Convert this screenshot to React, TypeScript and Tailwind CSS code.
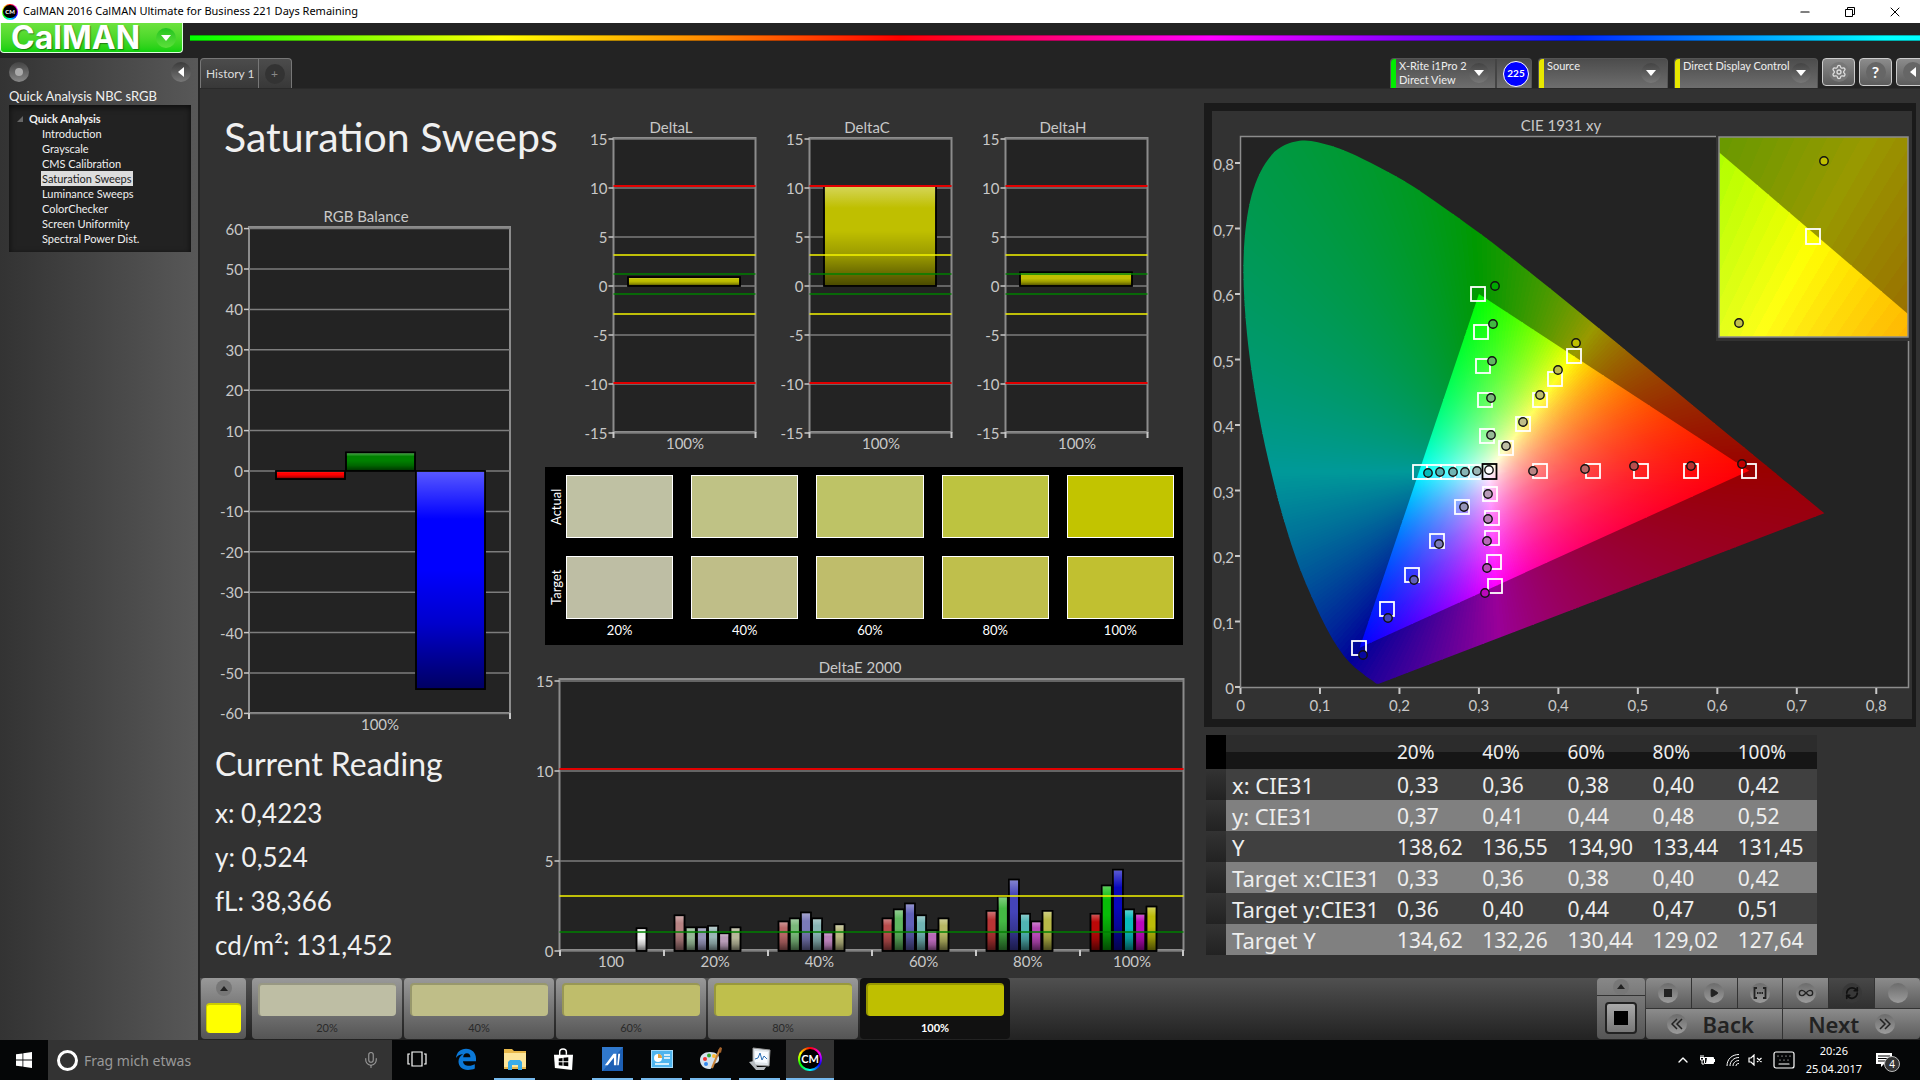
import type { ReactNode } from "react";
import { ChevronUp, Mic, Infinity as InfinityIcon, RefreshCw, Settings, Minus, X, Play, Keyboard } from "lucide-react";

const TREE = ["Introduction", "Grayscale", "CMS Calibration", "Saturation Sweeps", "Luminance Sweeps", "ColorChecker", "Screen Uniformity", "Spectral Power Dist."];

const LEVELS = ["20%", "40%", "60%", "80%", "100%"];
const ACTUAL = ["bg-[#bfc1a3]", "bg-[#bfc285]", "bg-[#bec366]", "bg-[#bdc340]", "bg-[#c2c400]"];
const TARGET = ["bg-[#bebea4]", "bg-[#bfbe88]", "bg-[#bfbd6b]", "bg-[#bfbf4c]", "bg-[#c1c030]"];
const STEPS = ["bg-[#bebea4]", "bg-[#bfbe88]", "bg-[#bfbd6b]", "bg-[#bfbf4c]", "bg-[#bfbf00]"];

const READINGS = ["x: 0,4223", "y: 0,524", "fL: 38,366", "cd/m²: 131,452"];

const TABLE = [
  { label: "x: CIE31", cells: ["0,33", "0,36", "0,38", "0,40", "0,42"] },
  { label: "y: CIE31", cells: ["0,37", "0,41", "0,44", "0,48", "0,52"] },
  { label: "Y", cells: ["138,62", "136,55", "134,90", "133,44", "131,45"] },
  { label: "Target x:CIE31", cells: ["0,33", "0,36", "0,38", "0,40", "0,42"] },
  { label: "Target y:CIE31", cells: ["0,36", "0,40", "0,44", "0,47", "0,51"] },
  { label: "Target Y", cells: ["134,62", "132,26", "130,44", "129,02", "127,64"] },
];

type Bar = { x: number; w: number; v: number; fill: string };

const DELTA_E: { label: string; values: number[]; fills: string[] }[] = [
  { label: "20%", values: [1.98, 1.31, 1.31, 1.4, 0.98, 1.31], fills: ["#b88484", "#95b895", "#9595b8", "#9bb8b8", "#b89bb8", "#b8b89b"] },
  { label: "40%", values: [1.64, 1.81, 2.14, 1.81, 1.03, 1.48], fills: ["#b86666", "#7ab87a", "#7a7ab8", "#88b4b4", "#b880b8", "#b8b880"] },
  { label: "60%", values: [1.81, 2.31, 2.64, 1.98, 1.15, 1.81], fills: ["#b84c4c", "#60b860", "#6060b8", "#70b4b4", "#b868b8", "#b8b864"] },
  { label: "80%", values: [2.23, 3.03, 3.97, 2.07, 1.64, 2.23], fills: ["#b83434", "#44b844", "#4444b8", "#50b4b4", "#b848b8", "#b8b848"] },
  { label: "100%", values: [2.07, 3.64, 4.52, 2.31, 2.07, 2.47], fills: ["#bb0808", "#08bb08", "#0808bb", "#08bbbb", "#bb08bb", "#bbbb08"] },
];

/* ---------- bar charts ---------- */

function Bars({ bars, y }: { bars: Bar[]; y: (v: number) => number }) {
  return (
    <>
      {bars.map((b, i) => {
        const top = Math.min(y(b.v), y(0));
        const h = Math.abs(y(b.v) - y(0));
        return (
          <g key={i} stroke="#000" strokeWidth="1.5">
            <rect x={b.x} y={top} width={b.w} height={h} fill={b.fill} />
            <rect x={b.x} y={top} width={b.w} height={h} fill="url(#gloss)" />
          </g>
        );
      })}
    </>
  );
}

function Chart({ title, width, height, left, right, top, bottom, titleX, titleY, y, ticks, bars, limits, xTicks, xLabels }: {
  title: string; width: number; height: number; left: number; right: number; top: number; bottom: number;
  titleX: number; titleY: number; y: (v: number) => number; ticks: number[]; bars: Bar[];
  limits?: { y: number; color: string }[]; xTicks: number[]; xLabels: { x: number; text: string }[];
}) {
  return (
    <svg viewBox={`0 0 ${width} ${height}`} className="block w-full overflow-visible font-['Lato',sans-serif] text-[15px]" fill="#c8c8c8" role="img" aria-label={title}>
      <rect x={left} y={top} width={right - left} height={bottom - top} fill="#232323" stroke="#8c8c8c" strokeWidth="2" />
      <text x={titleX} y={titleY} textAnchor="middle">{title}</text>
      {ticks.map(t => (
        <g key={t}>
          <line x1={left} x2={right} y1={y(t)} y2={y(t)} stroke="#7d7d7d" strokeWidth="1.5" />
          <line x1={left - 5} x2={left} y1={y(t)} y2={y(t)} stroke="#c8c8c8" strokeWidth="1.5" />
          <text x={left - 6} y={y(t) + 6} textAnchor="end">{t}</text>
        </g>
      ))}
      <Bars bars={bars} y={y} />
      {limits?.map(l => <line key={l.y} x1={left} x2={right} y1={l.y} y2={l.y} stroke={l.color} strokeWidth={l.color === "#e00000" ? 2 : 1.5} />)}
      {xTicks.map(x => <line key={x} x1={x} x2={x} y1={bottom} y2={bottom + 6} stroke="#c8c8c8" strokeWidth="2" />)}
      {xLabels.map(l => <text key={l.text} x={l.x} y={bottom + 17} textAnchor="middle">{l.text}</text>)}
    </svg>
  );
}

const DELTA_LIMITS = [
  { y: 73, color: "#e00000" },
  { y: 142, color: "#f4f400" },
  { y: 161, color: "#008000" },
  { y: 181, color: "#008000" },
  { y: 201, color: "#f4f400" },
  { y: 270, color: "#e00000" },
];

function DeltaChart({ title, value }: { title: string; value: number }) {
  return (
    <Chart title={title} width={196} height={342} left={39.5} right={181.5} top={25} bottom={319}
      titleX={97} titleY={20} y={v => 173 - v * 9.8} ticks={[15, 10, 5, 0, -5, -10, -15]}
      bars={[{ x: 54, w: 112, v: value, fill: "#bfbf00" }]} limits={DELTA_LIMITS}
      xTicks={[39.5, 181.5]} xLabels={[{ x: 111, text: "100%" }]} />
  );
}

function DeltaEChart() {
  const bars: Bar[] = [{ x: 96.5, w: 10, v: 1.26, fill: "#f4f4f4" }];
  DELTA_E.forEach((g, gi) => g.values.forEach((v, i) => bars.push({ x: 134.5 + gi * 104 + i * 11.2, w: 10, v, fill: g.fills[i] })));
  return (
    <Chart title="DeltaE 2000" width={650} height={323} left={19.5} right={643.5} top={24} bottom={295}
      titleX={320} titleY={18} y={v => 296 - v * 18} ticks={[15, 10, 5, 0]} bars={bars}
      limits={[{ y: 114, color: "#e00000" }, { y: 241, color: "#f4f400" }, { y: 277, color: "#008000" }]}
      xTicks={[20, 124, 228, 332, 436, 540, 643]}
      xLabels={["100", ...LEVELS].map((text, i) => ({ x: 71 + i * 104.2, text }))} />
  );
}

/* ---------- CIE diagram ---------- */

const LOCUS: [number, number][] = [
  [0.1741, 0.005], [0.1714, 0.0051], [0.1689, 0.0069], [0.1644, 0.0109], [0.1566, 0.0177], [0.144, 0.0297], [0.1355, 0.0399],
  [0.1241, 0.0578], [0.1096, 0.0868], [0.0913, 0.1327], [0.0687, 0.2007], [0.0454, 0.295], [0.0235, 0.4127], [0.0082, 0.5384],
  [0.0039, 0.6548], [0.0139, 0.7502], [0.0389, 0.812], [0.0743, 0.8338], [0.1142, 0.8262], [0.1547, 0.8059], [0.1929, 0.7816],
  [0.2296, 0.7543], [0.3016, 0.6923], [0.3731, 0.6245], [0.4441, 0.5547], [0.5125, 0.4866], [0.5752, 0.4242], [0.627, 0.3725],
  [0.6658, 0.334], [0.6915, 0.3083], [0.719, 0.2809], [0.7347, 0.2653],
];
const RED: [number, number] = [0.64, 0.33];
const GREEN: [number, number] = [0.3, 0.6];
const BLUE: [number, number] = [0.15, 0.06];
const WHITE: [number, number] = [0.3127, 0.329];

const px = (x: number) => 28.5 + x * 794.7;
const py = (y: number) => 576 - y * 655;
const pt = ([x, y]: [number, number]) => `${px(x).toFixed(2)},${py(y).toFixed(2)}`;

// Catmull-Rom through the spectral locus, closed by the purple line
const locusPath = () => {
  let d = `M${pt(LOCUS[0])}`;
  for (let i = 0; i < LOCUS.length - 1; i++) {
    const a = LOCUS[Math.max(i - 1, 0)], b = LOCUS[i], c = LOCUS[i + 1], e = LOCUS[Math.min(i + 2, LOCUS.length - 1)];
    d += `C${pt([b[0] + (c[0] - a[0]) / 6, b[1] + (c[1] - a[1]) / 6])} ${pt([c[0] - (e[0] - b[0]) / 6, c[1] - (e[1] - b[1]) / 6])} ${pt(c)}`;
  }
  return d + "Z";
};

const rgb = (x: number, y: number, k = 1) => {
  const X = x / y, Z = (1 - x - y) / y;
  const c = [3.2406 * X - 1.5372 - 0.4986 * Z, -0.9689 * X + 1.8758 + 0.0415 * Z, 0.0557 * X - 0.204 + 1.057 * Z].map(v => Math.max(0, v));
  const m = Math.max(...c);
  return `rgb(${c.map(v => Math.round((v / m) * 255 * k)).join(",")})`;
};

// distance from the white point to the gamut edge along a direction
const reach = (dx: number, dy: number) => {
  let best = 9;
  [[RED, GREEN], [GREEN, BLUE], [BLUE, RED]].forEach(([a, b]) => {
    const ex = b[0] - a[0], ey = b[1] - a[1];
    const det = dx * ey - dy * ex;
    const ax = a[0] - WHITE[0], ay = a[1] - WHITE[1];
    const t = (ax * ey - ay * ex) / det;
    if (t > 0 && t < best) best = t;
  });
  return best;
};

const WEDGES = Array.from({ length: 360 }, (_, i) => {
  const a = (i * Math.PI) / 180;
  const dx = Math.cos(a), dy = Math.sin(a);
  const t = reach(dx, dy);
  const far = (o: number): [number, number] => [WHITE[0] + Math.cos(a + o), WHITE[1] + Math.sin(a + o)];
  return {
    id: `ray${i}`,
    points: `${pt(WHITE)} ${pt(far(-0.0092))} ${pt(far(0.0092))}`,
    end: [WHITE[0] + dx * t, WHITE[1] + dy * t],
    stops: [0, 0.08, 0.16, 0.28, 0.42, 0.6, 0.8, 0.995].map(s => ({ s, c: rgb(WHITE[0] + dx * t * s, WHITE[1] + dy * t * s) })),
    outer: rgb(WHITE[0] + dx * t * 0.999, WHITE[1] + dy * t * 0.999, 0.6),
  };
});

function Gamut() {
  return (
    <g>
      <g clipPath="url(#locus)">
        {WEDGES.map(w => <polygon key={w.id} points={w.points} fill={w.outer} shapeRendering="crispEdges" />)}
      </g>
      <g clipPath="url(#srgb)">
        {WEDGES.map(w => <polygon key={w.id} points={w.points} fill={`url(#${w.id})`} shapeRendering="crispEdges" />)}
      </g>
    </g>
  );
}

const SQUARES = [
  [266, 183], [269, 221], [271, 255], [273, 289], [275, 325],
  [362, 245], [343, 268], [328, 289], [311, 313], [294, 337],
  [328, 360], [381, 360], [429, 360], [479, 360], [537, 360],
  [208, 361], [222, 361], [236, 361], [250, 361], [264, 361],
  [278, 383], [280, 407], [280, 427], [282, 451], [283, 475],
  [250, 396], [225, 430], [200, 464], [175, 498], [147, 537],
];
const DOTS: [number, number, string][] = [
  [283, 175, "#00a800"], [281, 213, "#40b840"], [280, 250, "#60b860"], [279, 287, "#7ab87a"], [279, 324, "#95b895"],
  [364, 232, "#bfbf00"], [346, 259, "#bfbf4c"], [328, 284, "#bfbd6b"], [311, 311, "#bfbe88"], [294, 335, "#bebea4"],
  [530, 353, "#c00000"], [479, 355, "#b83434"], [422, 355, "#b84c4c"], [373, 358, "#b86666"], [321, 360, "#b88484"],
  [216, 362, "#08bbbb"], [228, 361, "#50b4b4"], [241, 361, "#70b4b4"], [253, 361, "#88b4b4"], [265, 360, "#9bb8b8"],
  [276, 383, "#b89bb8"], [276, 408, "#b880b8"], [275, 430, "#b868b8"], [275, 457, "#b848b8"], [273, 482, "#bb08bb"],
  [252, 396, "#9595b8"], [227, 433, "#7a7ab8"], [202, 469, "#6060b8"], [176, 507, "#4444b8"], [151, 544, "#0808a0"],
];

function CieDiagram() {
  const ticks = [0, 1, 2, 3, 4, 5, 6, 7, 8];
  return (
    <svg viewBox="0 0 700 608" className="block w-full font-['Lato',sans-serif] text-[15px]" fill="#c8c8c8" role="img" aria-label="CIE 1931 xy">
      <defs>
        <clipPath id="locus"><path d={locusPath()} /></clipPath>
        <clipPath id="srgb"><polygon points={`${pt(RED)} ${pt(GREEN)} ${pt(BLUE)}`} /></clipPath>
        {WEDGES.map(w => (
          <linearGradient key={w.id} id={w.id} gradientUnits="userSpaceOnUse" x1={px(WHITE[0])} y1={py(WHITE[1])} x2={px(w.end[0])} y2={py(w.end[1])}>
            {w.stops.map(s => <stop key={s.s} offset={s.s} stopColor={s.c} />)}
          </linearGradient>
        ))}
      </defs>
      <text x="349" y="20" textAnchor="middle">CIE 1931 xy</text>
      <rect x="28.5" y="25.5" width="668" height="551" fill="#232323" stroke="#8c8c8c" strokeWidth="1.5" />
      <Gamut />
      {ticks.map(t => (
        <g key={t}>
          <line x1="23" x2="28" y1={py(t / 10)} y2={py(t / 10)} stroke="#c8c8c8" strokeWidth="2" />
          <text x="22" y={py(t / 10) + 7} textAnchor="end">{t ? `0,${t}` : "0"}</text>
          <line x1={px(t / 10)} x2={px(t / 10)} y1="577" y2="583" stroke="#c8c8c8" strokeWidth="2" />
          <text x={px(t / 10)} y="600" textAnchor="middle">{t ? `0,${t}` : "0"}</text>
        </g>
      ))}
      <g fill="none" stroke="#fff" strokeWidth="1.8">
        {SQUARES.map(([x, y]) => <rect key={`${x}-${y}`} x={x - 7} y={y - 7} width="14" height="14" />)}
        <rect x="270.5" y="353" width="14" height="15" stroke="#000" />
      </g>
      <g stroke="#111" strokeWidth="1.4">
        {DOTS.map(([x, y, c]) => <circle key={`${x}-${y}`} cx={x} cy={y} r="4.2" fill={c} />)}
        <circle cx="277" cy="359" r="4.2" fill="#fff" />
      </g>
      {/* magnified view round the selected patch */}
      <rect x="504" y="24" width="194" height="206" fill="#323232" />
      <svg x="507" y="26" width="189" height="200" viewBox="340.3 228.5 41.3 33.4" preserveAspectRatio="none">
        <Gamut />
      </svg>
      <rect x="507" y="26" width="189" height="200" fill="none" stroke="#8c8c8c" strokeWidth="1.5" />
      <rect x="594" y="118" width="14" height="15" fill="none" stroke="#fff" strokeWidth="1.8" />
      <circle cx="612" cy="50" r="4.2" fill="#bfbf00" stroke="#111" strokeWidth="1.4" />
      <circle cx="527" cy="212" r="4.2" fill="#bfbf4c" stroke="#111" strokeWidth="1.4" />
    </svg>
  );
}

/* ---------- chrome ---------- */

function CmBadge({ className }: { className: string }) {
  return (
    <span className={`flex items-center justify-center rounded-full bg-[conic-gradient(#f00,#f0f,#00f,#0ff,#0f0,#ff0,#f00)] ${className}`}>
      <span className="flex h-5/6 w-5/6 items-center justify-center rounded-full bg-black">CM</span>
    </span>
  );
}

function ArrowDisc() {
  return (
    <span className="flex h-5 w-5 shrink-0 items-center justify-center rounded-full bg-linear-to-b from-[#444] to-[#777]">
      <svg viewBox="0 0 10 6" className="w-2.5" fill="#fff"><path d="M0 0h10L5 6z" /></svg>
    </span>
  );
}

function DeviceTab({ lines, bar, className, children }: { lines: string[]; bar: string; className: string; children?: ReactNode }) {
  return (
    <div className={`flex rounded-t border border-b-0 border-[#555] bg-linear-to-b from-[#4c4c4c] to-[#6e6e6e] ${className}`}>
      <span className={`w-[5px] rounded-tl ${bar}`} />
      <button className="flex flex-1 items-start justify-between pr-1.5 pl-[3px] text-left text-[11px] leading-[14px] text-[#eee]">
        <span className="whitespace-nowrap">{lines.map(l => <span key={l} className="block">{l}</span>)}</span>
        <span className="pt-1"><ArrowDisc /></span>
      </button>
      {children}
    </div>
  );
}

function Header() {
  return (
    <>
      <header className="flex h-[23px] items-center bg-white pr-0.5 pl-0.5 text-black">
        <CmBadge className="h-4 w-4 text-[6px] font-bold text-white" />
        <h1 className="flex-1 pl-[5px] font-['Noto_Sans',sans-serif] text-[11px]">CalMAN 2016 CalMAN Ultimate for Business 221 Days Remaining</h1>
        <button aria-label="Minimize" className="flex w-[45px] justify-center"><Minus className="h-3.5 w-3.5" strokeWidth={2} /></button>
        <button aria-label="Restore" className="flex w-[45px] justify-center">
          <svg viewBox="0 0 10 10" className="h-2.5 w-2.5" fill="none" stroke="#000"><path d="M.5 2.5h7v7h-7zM2.5 2.5v-2h7v7h-2" /></svg>
        </button>
        <button aria-label="Close" className="flex w-[46px] justify-center"><X className="h-4 w-4" strokeWidth={1.5} /></button>
      </header>
      <div className="flex h-[35px] gap-[7px] bg-[#232323]">
        <button className="flex h-[30px] w-[183px] items-center justify-between rounded-b border border-t-0 border-[#dfd] bg-linear-to-b from-[#6de23e] to-[#0cd00c] pr-1.5 pl-2.5 text-white">
          <span className="font-['Inter',sans-serif] text-[32px] leading-7 font-bold text-shadow-[1px_1px_1px_#0006]">CalMAN</span>
          <span className="flex h-5 w-5 items-center justify-center rounded-full bg-linear-to-b from-[#1fc41f] to-[#5be03a]">
            <svg viewBox="0 0 10 6" className="w-2.5" fill="#fff"><path d="M0 0h10L5 6z" /></svg>
          </span>
        </button>
        <div className="mt-3 h-[6px] flex-1 border-y border-black/30 bg-[linear-gradient(90deg,#0f0_0%,#ff0_18%,#f80_30%,#f00_41%,#f0f_59%,#80f_70%,#02f_80%,#0ff_98%)]" />
      </div>
    </>
  );
}

function Sidebar() {
  return (
    <aside className="flex w-[200px] shrink-0 flex-col border-r-2 border-[#232323] bg-linear-to-r from-[#333] to-[#585858] pr-[7px] pl-[9px] text-[#f0f0f0]">
      <div className="flex items-center justify-between pt-1">
        <button aria-label="Pin" className="flex h-5 w-5 items-center justify-center rounded-full bg-linear-to-b from-[#444] to-[#888]">
          <span className="h-2 w-2 rounded-full bg-[#aaa]" />
        </button>
        <button aria-label="Collapse" className="flex h-5 w-5 items-center justify-center rounded-full bg-linear-to-b from-[#3c3c3c] to-[#777]">
          <svg viewBox="0 0 6 10" className="h-2.5" fill="#fff"><path d="M6 0v10L0 5z" /></svg>
        </button>
      </div>
      <h2 className="pt-[5px] text-[13px] leading-[18px] whitespace-nowrap">Quick Analysis NBC sRGB</h2>
      <nav className="h-[147px] bg-[#222] pt-1.5 text-[11px] shadow-[inset_0_2px_6px_#000a]">
        <div className="flex items-center gap-1.5 pl-2 leading-[15px] font-bold">
          <svg viewBox="0 0 6 6" className="w-1.5" fill="#666"><path d="M6 0v6H0z" /></svg>
          Quick Analysis
        </div>
        {TREE.map(t => (
          <a key={t} href="#" className="flex pl-8">
            <span className={`block px-px leading-[15px] ${t === "Saturation Sweeps" ? "bg-[#ddd] text-[#222]" : ""}`}>{t}</span>
          </a>
        ))}
      </nav>
    </aside>
  );
}

function TabBar() {
  const square = "flex h-7 w-[33px] items-center justify-center rounded border border-[#ccc] bg-linear-to-b from-[#8c8c8c] to-[#5c5c5c]";
  return (
    <div className="flex h-[31px] justify-between overflow-hidden border-b border-[#2a2a2a] bg-[#232323]">
      <div className="flex rounded-t border border-b-0 border-[#777] bg-linear-to-b from-[#4c4c4c] to-[#383838]">
        <button className="border-r border-[#777] pr-[3px] pl-[5px] text-[12px] text-[#ddd]">History 1</button>
        <button aria-label="Add tab" className="flex w-8 items-center justify-center">
          <span className="flex h-5 w-5 items-center justify-center rounded-full bg-[#333] text-[12px] text-[#888]">+</span>
        </button>
      </div>
      <div className="-mr-[9px] flex gap-1">
        <DeviceTab lines={["X-Rite i1Pro 2", "Direct View"]} bar="bg-[#0e0]" className="mr-0.5 w-[142px]">
          <span className="flex items-center border-l-2 border-[#444] pr-0.5 pl-1.5">
            <span className="flex h-[26px] w-[26px] items-center justify-center rounded-full border border-white bg-[#00f] text-[10px] font-bold text-white">225</span>
          </span>
        </DeviceTab>
        <DeviceTab lines={["Source"]} bar="bg-[#e8e800]" className="mr-0.5 w-[130px]" />
        <DeviceTab lines={["Direct Display Control"]} bar="bg-[#e8e800]" className="w-[144px]" />
        <button aria-label="Settings" className={square}><span className="rounded-full bg-[#777] p-0.5"><Settings className="h-4 w-4 text-[#ddd]" /></span></button>
        <button aria-label="Help" className={square}><span className="flex h-5 w-5 items-center justify-center rounded-full bg-[#666] text-[16px] font-bold text-white">?</span></button>
        <button aria-label="Hide" className={square}>
          <span className="flex h-5 w-5 items-center justify-center rounded-full bg-[#666]"><svg viewBox="0 0 6 10" className="h-2.5" fill="#fff"><path d="M6 0v10L0 5z" /></svg></span>
        </button>
      </div>
    </div>
  );
}

function Swatches() {
  return (
    <section className="mr-[7px] ml-[5px] flex bg-black pt-2 pr-[9px] text-white">
      <div className="flex w-[21px] flex-col items-center gap-[18px] text-[13px]">
        <span className="flex h-[63px] rotate-180 items-center justify-center leading-4 [writing-mode:vertical-rl]">Actual</span>
        <span className="flex h-[63px] rotate-180 items-center justify-center leading-4 [writing-mode:vertical-rl]">Target</span>
      </div>
      <div className="grid flex-1 grid-cols-5 gap-x-[18px]">
        {ACTUAL.map(c => <div key={c} className={`mb-[18px] h-[63px] border border-white ${c}`} />)}
        {TARGET.map(c => <div key={c} className={`h-[63px] border border-white ${c}`} />)}
        {LEVELS.map(l => <p key={l} className="pt-px pb-[5px] text-center text-[13px] leading-5">{l}</p>)}
      </div>
    </section>
  );
}

function DataTable() {
  return (
    <table className="ml-4 w-[611px] table-fixed border-collapse font-['Noto_Sans',sans-serif] text-[21px] text-[#eee]">
      <thead>
        <tr className="h-[34px] bg-[linear-gradient(#2c2c2c_50%,#161616_50%)] text-left text-[19px]">
          <td className="w-5 bg-black" />
          <td className="w-[165px]" />
          {LEVELS.map(l => <th key={l} scope="col" className="p-0 pl-1.5 leading-7 font-normal">{l}</th>)}
        </tr>
      </thead>
      <tbody>
        {TABLE.map(r => (
          <tr key={r.label} className="h-[31px] odd:bg-[#404040] even:bg-[#808080]">
            <td className="bg-linear-to-b from-[#333] to-[#222] p-0" />
            <th scope="row" className="p-0 pl-1.5 text-left text-[22px] leading-7 font-normal whitespace-nowrap">{r.label}</th>
            {r.cells.map((c, i) => <td key={i} className="p-0 pl-1.5 leading-7">{c}</td>)}
          </tr>
        ))}
      </tbody>
    </table>
  );
}

function Content() {
  return (
    <main className="grid flex-1 grid-cols-[340fr_650fr_730fr] bg-[#323232]">
      <div className="min-w-0">
        <h2 className="pt-6 pl-6 text-[41px] leading-12 whitespace-nowrap text-[#f0f0f0]">Saturation Sweeps</h2>
        <div className="pt-10">
          <Chart title="RGB Balance" width={340} height={540} left={49} right={310} top={26} bottom={512}
            titleX={166} titleY={21} y={v => 270 - v * 4.04} ticks={[60, 50, 40, 30, 20, 10, 0, -10, -20, -30, -40, -50, -60]}
            bars={[
              { x: 76, w: 69, v: -2, fill: "#ff0000" },
              { x: 146, w: 69, v: 4.6, fill: "#008000" },
              { x: 216, w: 69, v: -54, fill: "#0000ff" },
            ]}
            xTicks={[49, 310]} xLabels={[{ x: 180, text: "100%" }]} />
        </div>
        <div className="pl-[15px] text-[#f0f0f0]">
          <h3 className="pb-1 text-[32px] leading-[46px] whitespace-nowrap">Current Reading</h3>
          {READINGS.map(r => <p key={r} className="text-[26px] leading-11">{r}</p>)}
        </div>
      </div>
      <div className="min-w-0">
        <div className="grid grid-cols-3 pt-6 pr-7 pb-3 pl-[34px]">
          <DeltaChart title="DeltaL" value={0.9} />
          <DeltaChart title="DeltaC" value={10.2} />
          <DeltaChart title="DeltaH" value={1.4} />
        </div>
        <Swatches />
        <div className="pt-2.5"><DeltaEChart /></div>
      </div>
      <div className="min-w-0 pt-[14px]">
        <div className="mr-1 mb-2 ml-[14px] border-8 border-r-4 border-[#1a1a1a]"><CieDiagram /></div>
        <DataTable />
      </div>
    </main>
  );
}

const disc = "flex h-5 w-5 items-center justify-center rounded-full bg-linear-to-b from-[#6c6c6c] to-[#9c9c9c]";

function BottomBar() {
  const key = "flex h-[30px] items-center justify-center bg-linear-to-b from-[#8c8c8c] to-[#5c5c5c] text-[#222]";
  return (
    <footer className="flex h-[62px] bg-linear-to-b from-[#505050] to-[#222] pb-px pl-px">
      <div className="mr-1.5 flex w-[45px] flex-col items-center justify-between rounded bg-linear-to-b from-[#999] to-[#555] pt-0.5 pb-1.5">
        <button aria-label="Expand patch" className="flex h-4 w-4 items-center justify-center rounded-full bg-[#777]"><svg viewBox="0 0 8 5" className="w-2" fill="#222"><path d="M0 5h8L4 0z" /></svg></button>
        <span className="h-[30px] w-[35px] rounded-sm border-t-2 border-l border-[#cc0] bg-[#ff0]" />
      </div>
      <div className="flex flex-1 gap-0.5">
        {LEVELS.map((l, i) => (
          <button key={l} className={`flex w-[150px] flex-col items-stretch rounded px-1.5 pt-[5px] text-[11px] ${
            l === "100%" ? "bg-[#111] font-bold text-white" : "bg-linear-to-b from-[#999] to-[#555] text-[#2a2a2a]"
          }`}>
            <span className={`h-9 rounded border-t-2 border-l-2 border-black/20 ${STEPS[i]}`} />
            <span className="pt-px leading-[22px]">{l}</span>
          </button>
        ))}
      </div>
      <div className="mr-px flex w-12 flex-col items-center rounded bg-linear-to-b from-[#888] to-[#555]">
        <button aria-label="Expand window" className="flex h-[18px] w-full items-center justify-center border-b border-[#333]">
          <span className="flex h-4 w-4 items-center justify-center rounded-full bg-[#777]"><svg viewBox="0 0 8 5" className="w-2" fill="#222"><path d="M0 5h8L4 0z" /></svg></span>
        </button>
        <button aria-label="Pattern window" className="mt-1.5 flex h-8 w-8 items-center justify-center rounded border-2 border-[#222] bg-linear-to-b from-[#aaa] to-[#777]">
          <span className="h-3.5 w-3.5 bg-black" />
        </button>
      </div>
      <div className="grid w-[274px] grid-cols-6 gap-px overflow-hidden rounded bg-[#333]">
        <button aria-label="Stop" className={key}><span className={disc}><span className="h-2 w-2 bg-[#222]" /></span></button>
        <button aria-label="Play" className={key}><span className={disc}><Play className="h-2.5 w-2.5" fill="#222" /></span></button>
        <button aria-label="Read series" className={key}>
          <span className={disc}><svg viewBox="0 0 14 12" className="w-3.5" fill="none" stroke="#222" strokeWidth="1.8"><path d="M4 1H1.5v10H4M10 1h2.5v10H10M4 6h1.5M6.3 6h1.5M8.5 6H10" /></svg></span>
        </button>
        <button aria-label="Read continuously" className={key}><span className={disc}><InfinityIcon className="h-4 w-4" /></span></button>
        <button aria-label="Repeat" className="flex h-[30px] items-center justify-center bg-linear-to-b from-[#484848] to-[#303030] text-[#111]"><span className="flex h-5 w-5 items-center justify-center rounded-full bg-[#383838]"><RefreshCw className="h-3.5 w-3.5" strokeWidth={3} /></span></button>
        <button aria-label="Status" className={key}><span className={disc} /></button>
        <button className={`col-span-3 gap-4 pr-2 font-['Noto_Sans',sans-serif] text-[22px] font-semibold ${key}`}>
          <span className={disc}><svg viewBox="0 0 12 12" className="w-3" fill="none" stroke="#222" strokeWidth="1.5"><path d="M6 1L1 6l5 5M11 1L6 6l5 5" /></svg></span>
          Back
        </button>
        <button className={`col-span-3 gap-4 font-['Noto_Sans',sans-serif] text-[22px] font-semibold ${key}`}>
          Next
          <span className={disc}><svg viewBox="0 0 12 12" className="w-3" fill="none" stroke="#222" strokeWidth="1.5"><path d="M1 1l5 5-5 5M6 1l5 5-5 5" /></svg></span>
        </button>
      </div>
    </footer>
  );
}

const APPS: { name: string; open: boolean; icon: ReactNode }[] = [
  { name: "Task View", open: false, icon: <svg viewBox="0 0 20 16" className="w-5" fill="none" stroke="#fff" strokeWidth="1.2"><path d="M5 1h10v14H5zM3 3H1v10h2M17 3h2v10h-2" /></svg> },
  { name: "Edge", open: false, icon: <svg viewBox="0 0 22 22" className="w-[22px]" fill="#0b78d7"><path d="M1 10C1.5 4.5 5.500.8 11 .8c6 0 10 4.200 10 9.800v2.600H8c.2 3 2.600 4.600 6 4.600 2.200 0 4.200-.6 5.800-1.500v4.200c-1.900 1-4.200 1.400-6.800 1.400C7 21.900 3.500 18.500 3.500 13.600c0-3.300 1.700-6 4.700-7.600C4.800 6.300 2.400 7.800 1 10zm7.200-.8h7.200c0-2.500-1.400-4-3.500-4-2.200 0-3.500 1.500-3.700 4z" /></svg> },
  { name: "Explorer", open: true, icon: <svg viewBox="0 0 22 22" className="w-[22px]"><path d="M0 1h8l2 2h12v18H0z" fill="#e8b84a" /><path d="M0 5h22v14H0z" fill="#fde59a" /><path d="M4 22v-8l2-2h10l2 2v8h-4v-5H8v5z" fill="#3aabe8" /></svg> },
  { name: "Store", open: false, icon: <svg viewBox="0 0 22 24" className="w-[21px]"><path d="M1 7h20l-1 16-18-2z" fill="#fff" /><path d="M7 8V4c0-4 7-4 7 0v3" fill="none" stroke="#fff" strokeWidth="1.5" /><path d="M6 11l4-.5V14H6zM11 10.3l5-.5V14h-5zM6 15h4v3.5L6 18zM11 15h5v4.2l-5-.6z" fill="#000" /></svg> },
  { name: "Analyzer", open: true, icon: <svg viewBox="0 0 22 26" className="w-[21px]"><rect width="22" height="26" fill="#1d5fb4" /><path d="M0 0h22L0 26z" fill="#3078cc" /><path d="M3 19L12 7h3v12h-2.500v-8L6 19zM17 7h2l-1.500 12h-1.500z" fill="#fff" /></svg> },
  { name: "Display", open: true, icon: <svg viewBox="0 0 22 18" className="w-[22px]"><rect x=".5" y=".5" width="21" height="17" fill="#4fb4ee" stroke="#a8dcfa" /><circle cx="7" cy="8" r="4" fill="#fff" /><path d="M7 8V4a4 4 0 0 1 4 4z" fill="#e9a33b" /><path d="M13 5h6M13 8h6M4 14h14" stroke="#fff" strokeWidth="1.5" /></svg> },
  { name: "Paint", open: true, icon: <svg viewBox="0 0 24 24" className="w-6"><path d="M11 5c6 0 10 3 9 8-.7 4-5 3-6 5s-1 4-4 4C5 22 1 18 1 13s4-8 10-8z" fill="#d4e2ee" /><circle cx="6" cy="12" r="2" fill="#e33" /><circle cx="10" cy="8.5" r="2" fill="#3a3" /><circle cx="15" cy="9" r="2" fill="#fb3" /><circle cx="7" cy="17" r="2" fill="#38e" /><path d="M21 2L13 21" stroke="#c8843c" strokeWidth="2" /><path d="M19 4l2-4 2 1-1 5z" fill="#a8642c" /></svg> },
  { name: "Monitor", open: true, icon: <svg viewBox="0 0 24 24" className="w-6"><path d="M5 1l17 2-1 16-16-1z" fill="#dfe5ea" stroke="#999" /><path d="M7 4l13 1-1 11-12-1z" fill="#f8fbff" /><path d="M7 12l3-1 2-5 2 7 2-4 3 3" fill="none" stroke="#2b6fb5" /><path d="M1 15l5-1 3 6h9l-2 3H8z" fill="#b8bcc0" /></svg> },
];

function Taskbar() {
  return (
    <div className="flex h-10 items-stretch bg-[#050607] text-white">
      <button aria-label="Start" className="flex w-12 items-center justify-center">
        <svg viewBox="0 0 16 16" className="h-4 w-4" fill="#fff"><path d="M0 2.3L6.5 1.4v6.2H0zM7.3 1.3L16 0v7.6H7.3zM0 8.4h6.5v6.2L0 13.7zM7.3 8.4H16V16l-8.7-1.3z" /></svg>
      </button>
      <label className="flex w-[344px] items-center bg-[#333] pr-3 pl-[9px]">
        <span className="mr-1.5 h-[21px] w-[21px] shrink-0 rounded-full border-[3px] border-white" />
        <input aria-label="Frag mich etwas" placeholder="Frag mich etwas" className="min-w-0 flex-1 bg-transparent font-['Noto_Sans',sans-serif] text-[14px] outline-none placeholder:text-[#999]" />
        <Mic className="h-[18px] w-[18px] text-[#999]" strokeWidth={1.5} />
      </label>
      {APPS.map(a => (
        <button key={a.name} aria-label={a.name} className="flex w-[49px] flex-col items-center px-1">
          <span className="flex flex-1 items-center">{a.icon}</span>
          <span className={`h-0.5 w-full ${a.open ? "bg-[#76b9ed]" : ""}`} />
        </button>
      ))}
      <button aria-label="CalMAN" className="ml-0.5 flex w-12 flex-col items-center bg-[#333]">
        <span className="flex flex-1 items-center"><CmBadge className="h-6 w-6 text-[11px] font-bold" /></span>
        <span className="h-0.5 w-full bg-[#76b9ed]" />
      </button>
      <div className="ml-auto flex items-center pr-5 font-['Noto_Sans',sans-serif]">
        <ChevronUp className="mr-2 h-4 w-4" strokeWidth={2} />
        <svg viewBox="0 0 17 12" className="mr-2.5 w-[17px]" fill="none" stroke="#fff"><path d="M5.5 3.5h9v6h-9zM15.5 5v3M1 3.5h4M2 1v2M4 1v2M1.5 4v2h3V4M3 6v4h2" /><path d="M8 4h6v5H7z" fill="#fff" stroke="none" /></svg>
        <svg viewBox="0 0 14 14" className="mr-2 w-3.5" fill="none" stroke="#fff"><path d="M1 13C1 6 6 1.500 13 1.500M4 13c0-5 4-8.500 9-8.500M7 13c0-3 2.500-5.500 6-5.500M10 13c0-1.500 1-2.500 3-2.500" /></svg>
        <svg viewBox="0 0 16 12" className="mr-2 w-4" fill="none" stroke="#fff" strokeWidth="1.2"><path d="M1 4h2l3-3v10L3 8H1zM9 4l4.500 4M13.500 4L9 8" /></svg>
        <Keyboard className="mr-2.5 h-6 w-6" strokeWidth={1.2} />
        <time className="mr-3.5 text-center text-[11px] leading-[18px]"><span className="block">20:26</span><span className="block">25.04.2017</span></time>
        <button aria-label="Notifications" className="relative h-6 w-6">
          <svg viewBox="0 0 16 15" className="w-4"><path d="M0 0h16v11H8l-3 3v-3H0z" fill="#fff" /><path d="M2 3h12M2 5.500h12M2 8h8" stroke="#000" /></svg>
          <span className="absolute right-0 bottom-0 flex h-4 w-4 items-center justify-center rounded-full border border-[#bbb] bg-[#333] text-[10px]">4</span>
        </button>
      </div>
    </div>
  );
}

export default function App() {
  return (
    <div className="flex min-h-screen flex-col overflow-x-hidden bg-[#323232] font-['Lato',sans-serif]">
      <svg className="absolute h-0 w-0" aria-hidden="true">
        <defs>
          <linearGradient id="gloss" x1="0" y1="0" x2="0" y2="1">
            <stop offset="0" stopColor="#fff" stopOpacity="0.35" />
            <stop offset="0.22" stopColor="#fff" stopOpacity="0" />
            <stop offset="0.45" stopColor="#000" stopOpacity="0" />
            <stop offset="0.7" stopColor="#000" stopOpacity="0.2" />
            <stop offset="1" stopColor="#000" stopOpacity="0.62" />
          </linearGradient>
        </defs>
      </svg>
      <Header />
      <div className="flex flex-1">
        <Sidebar />
        <div className="flex min-w-0 flex-1 flex-col">
          <TabBar />
          <Content />
          <BottomBar />
        </div>
      </div>
      <Taskbar />
    </div>
  );
}
